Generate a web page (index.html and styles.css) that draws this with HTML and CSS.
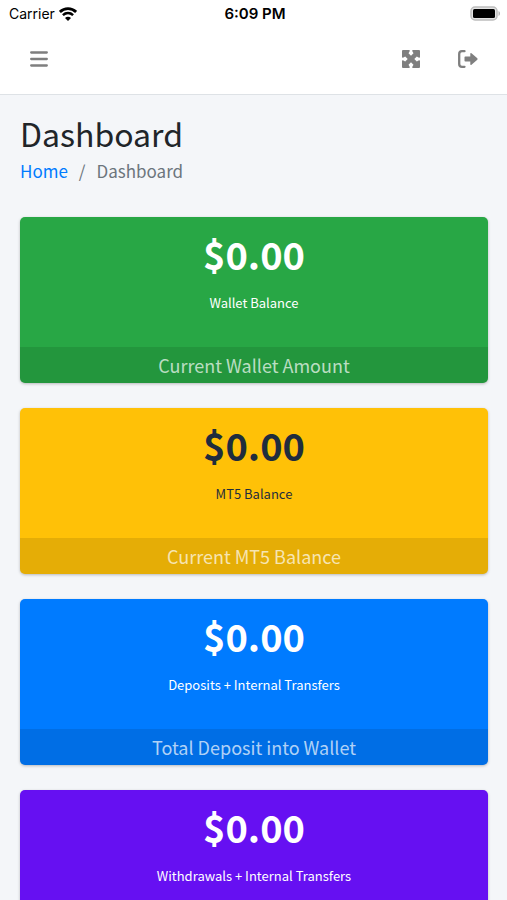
FILE: index.html
```html
<!DOCTYPE html>
<html lang="en">
<head>
    <meta charset="UTF-8">
    <meta name="viewport" content="width=device-width, initial-scale=1.0">
    <title>Dashboard</title>
    <link rel="stylesheet" href="styles.css">
</head>
<body>
    <div class="status-bar">
        <div class="carrier">
            <span>Carrier</span>
            <svg class="wifi" viewBox="0 0 18 14" aria-hidden="true">
                <path d="M.9 4.900C5.500.500 12.500.500 17.100 4.900" fill="none" stroke="#000" stroke-width="2.800"/>
                <path d="M3.900 8.200c3-2.800 7.200-2.800 10.200 0" fill="none" stroke="#000" stroke-width="2.500"/>
                <path d="M9 14 6 10.900c1.800-1.500 4.200-1.500 6 0z"/>
            </svg>
        </div>
        <div class="clock">6:09 PM</div>
        <div class="power">
            <svg class="battery" viewBox="0 0 31 15" aria-hidden="true">
                <rect x="1" y="1" width="26" height="13" rx="4" fill="#e4e4e4" stroke="#bdbdbd" stroke-width="1.500"/>
                <rect x="3" y="3" width="22" height="9" rx="1.500"/>
                <path d="M28.500 5v5c2-.8 2-4.200 0-5z" fill="#b5b5b5"/>
            </svg>
        </div>
    </div>

    <nav class="navbar">
        <button type="button" class="nav-btn" aria-label="Menu">
            <svg class="bars" viewBox="0 0 18 18"><path d="M1.200 2.500h15.600M1.200 9h15.600M1.200 15.500h15.600"/></svg>
        </button>
        <div class="nav-right">
            <button type="button" class="nav-btn" aria-label="Fullscreen">
                <svg class="expand" viewBox="0 0 18 18"><path d="M1 0h6q1 0 .8 1L6.500 3.200 9 5.700l2.500-2.500L10.200 1Q10 0 11 0h6q1 0 1 1v6q0 1-1 .8l-2.200-1.300L12.300 9l2.500 2.500 2.200-1.300q1-.2 1 .8v6q0 1-1 1h-6q-1 0-.8-1l1.300-2.200L9 12.300l-2.500 2.500L7.800 17q.2 1-.8 1H1q-1 0-1-1v-6q0-1 1-.8l2.200 1.300L5.700 9 3.200 6.500 1 7.800Q0 8 0 7V1q0-1 1-1z"/></svg>
            </button>
            <button type="button" class="nav-btn" aria-label="Log out">
                <svg class="logout" viewBox="0 0 20 18"><path class="door" d="M6.500 1.200H4Q1.200 1.200 1.200 4v10q0 2.800 2.800 2.800h2.500"/><path d="M7.300 6.500h5V3.800q.1-1.200 1.200-.5l5.800 5q.7.700 0 1.400l-5.800 5q-1.100.7-1.200-.5v-2.700h-5q-.8 0-.8-.8V7.300q0-.8.800-.8z"/></svg>
            </button>
        </div>
    </nav>

    <main class="content">
        <h1>Dashboard</h1>
        <ol class="breadcrumb">
            <li><a href="#">Home</a></li>
            <li class="active">Dashboard</li>
        </ol>

        <div class="boxes">
            <section class="small-box bg-success">
                <div class="inner">
                    <h3>$0.00</h3>
                    <p>Wallet Balance</p>
                </div>
                <div class="box-footer">Current Wallet Amount</div>
            </section>
            <section class="small-box bg-warning">
                <div class="inner">
                    <h3>$0.00</h3>
                    <p>MT5 Balance</p>
                </div>
                <div class="box-footer">Current MT5 Balance</div>
            </section>
            <section class="small-box bg-primary">
                <div class="inner">
                    <h3>$0.00</h3>
                    <p>Deposits + Internal Transfers</p>
                </div>
                <div class="box-footer">Total Deposit into Wallet</div>
            </section>
            <section class="small-box bg-indigo">
                <div class="inner">
                    <h3>$0.00</h3>
                    <p>Withdrawals + Internal Transfers</p>
                </div>
            </section>
        </div>
    </main>
</body>
</html>
```
FILE: styles.css
```css
* {
    box-sizing: border-box;
}
body {
    display: flex;
    flex-direction: column;
    height: 100vh;
    margin: 0;
    font-family: "Noto Sans CJK SC", "Noto Sans", sans-serif;
    color: #212529;
    background-color: #f4f6f9;
}
.status-bar {
    display: grid;
    grid-template-columns: 1fr auto 1fr;
    align-items: center;
    flex-shrink: 0;
    height: 27px;
    padding: 0 6px 0 9px;
    background: white;
    color: black;
    font-family: Inter, sans-serif;
    font-size: 15px;
}
.carrier {
    display: flex;
    align-items: center;
    gap: 4px;
    font-size: 14px;
}
.wifi {
    width: 18px;
    height: 14px;
}
.clock {
    font-weight: 600;
}
.power {
    display: flex;
    justify-content: flex-end;
}
.battery {
    width: 31px;
    height: 15px;
}
.navbar {
    display: flex;
    justify-content: space-between;
    align-items: center;
    flex-shrink: 0;
    height: 68px;
    padding: 0 11px 4px 10px;
    background: white;
    border-bottom: 1px solid #dee2e6;
}
.nav-right {
    display: flex;
}
.nav-btn {
    display: flex;
    align-items: center;
    justify-content: center;
    width: 57px;
    height: 54px;
    padding: 0;
    border: none;
    background: none;
    cursor: pointer;
}
.nav-btn svg {
    height: 18px;
    fill: #7f7f7f;
}
.nav-btn .bars,
.nav-btn .door {
    fill: none;
    stroke: #7f7f7f;
    stroke-width: 2.3;
    stroke-linecap: round;
}
.content {
    flex: 1;
    min-height: 0;
    padding: 18px 19px 0 20px;
    overflow-y: auto;
    scrollbar-width: none;
}
h1 {
    margin: 0;
    font-size: 32px;
    font-weight: 400;
    line-height: 40px;
}
.breadcrumb {
    display: flex;
    margin: 0 0 29px;
    padding: 0;
    list-style: none;
    font-size: 17px;
    line-height: 35px;
}
.breadcrumb a {
    color: #007bff;
    text-decoration: none;
}
.active {
    color: #6c757d;
}
.active::before {
    content: "/";
    padding: 0 11px;
}
.boxes {
    display: flex;
    flex-direction: column;
    gap: 25px;
}
.small-box {
    flex-shrink: 0;
    border-radius: 5px;
    overflow: hidden;
    text-align: center;
    color: white;
    box-shadow: 0 1px 3px rgba(0, 0, 0, 0.25);
}
.inner {
    height: 130px;
    padding: 11px;
}
h3 {
    margin: 0 0 14px;
    font-size: 38px;
    font-weight: 700;
    line-height: 52px;
}
p {
    margin: 0;
    font-size: 13px;
    line-height: 18px;
}
.box-footer {
    background: rgba(0, 0, 0, 0.1);
    color: rgba(255, 255, 255, 0.7);
    font-size: 18px;
    line-height: 36px;
}
.bg-success {
    background-color: #28a745;
}
.bg-warning {
    background-color: #ffc107;
    color: #1f2d3d;
}
.bg-primary {
    background-color: #007bff;
}
.bg-indigo {
    background-color: #6610f2;
}
```
